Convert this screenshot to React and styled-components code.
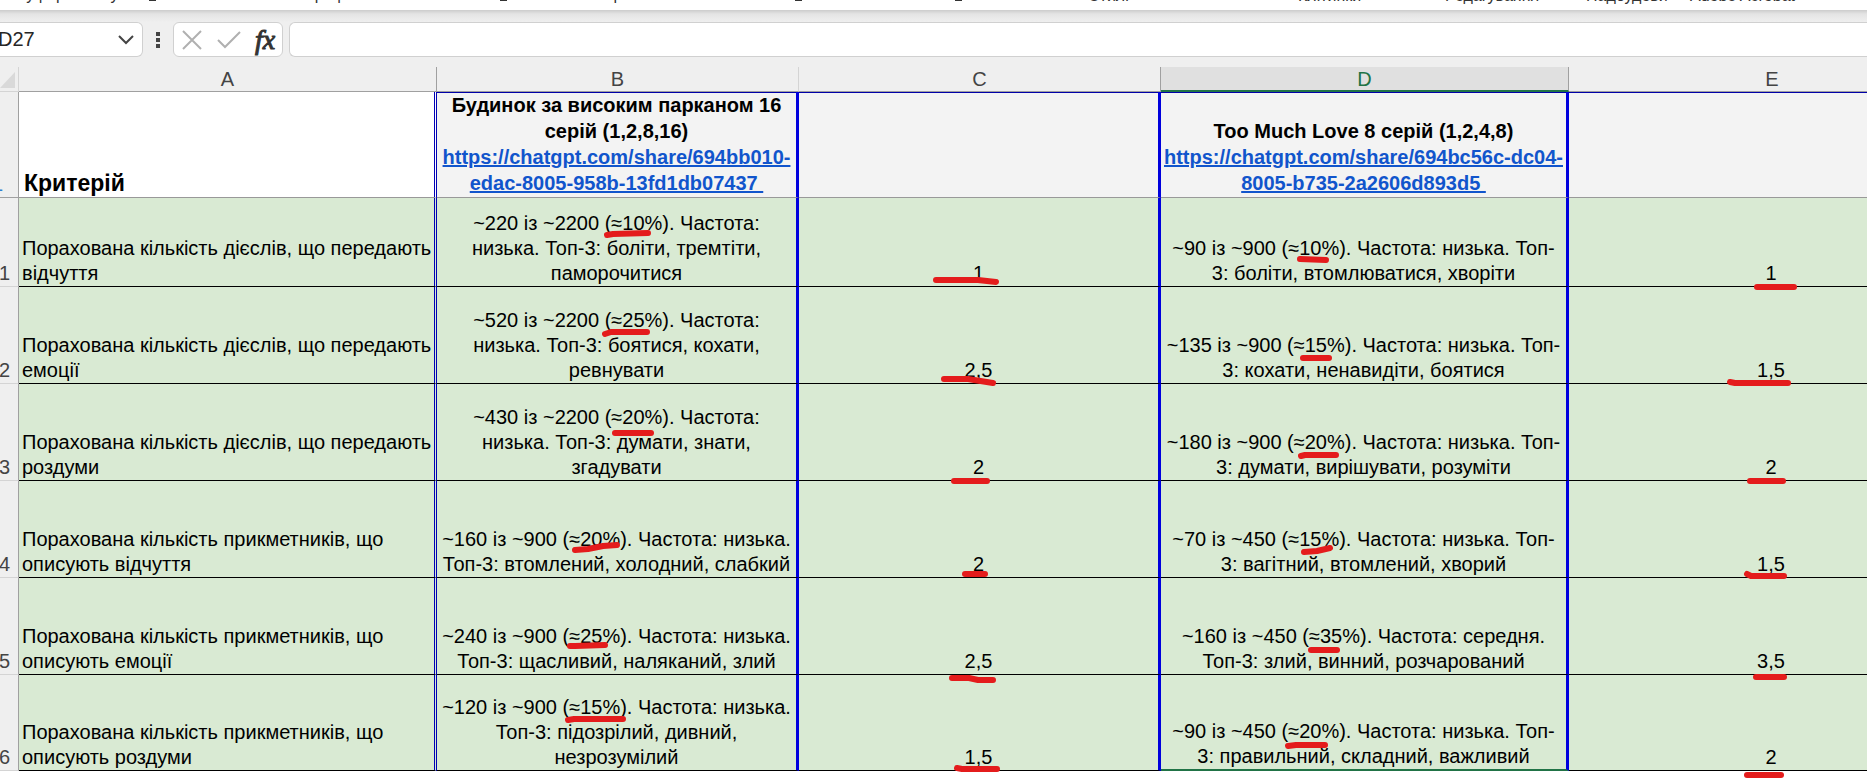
import styled, { createGlobalStyle } from 'styled-components'

const GlobalStyle = createGlobalStyle`
  * {
    box-sizing: border-box;
  }
  body {
    margin: 0;
    background: #ffffff;
    color: #000000;
    font-family: "Liberation Sans", Arial, sans-serif;
    overflow: hidden;
  }
`

const Page = styled.main`
  display: flex;
  flex-direction: column;
  min-height: 100vh;
  overflow: hidden;
`

// Only the last pixels of the ribbon are scrolled into view
const Ribbon = styled.div`
  position: relative;
  height: 10px;
  flex: none;
  overflow: hidden;
  background: #ffffff;
`

const RibbonGroup = styled.span`
  position: absolute;
  bottom: ${props => props.$high ? 6 : 5}px;
  left: ${props => props.$left}px;
  font-size: 16px;
  line-height: 18px;
  white-space: nowrap;
  color: #333333;
`

const Launcher = styled.span`
  position: absolute;
  top: 0;
  left: ${props => props.$left}px;
  width: 7px;
  height: 1px;
  background: #333333;
`

const FormulaBar = styled.div`
  display: flex;
  align-items: center;
  flex: none;
  height: 57px;
  padding: 2px 0 0;
  background: linear-gradient(#cccccc, #e4e4e4 4px, #efefef 12px);
`

const NameBox = styled.div`
  display: flex;
  align-items: center;
  width: 143px;
  height: 35px;
  background: #ffffff;
  border: 1px solid #d0d0d0;
  border-left: none;
  border-radius: 0 6px 6px 0;
`

const NameInput = styled.input`
  width: 112px;
  padding: 0;
  border: none;
  outline: none;
  background: none;
  font: 20px "Liberation Sans", Arial, sans-serif;
  color: #262626;
  text-indent: -2px;
`

const IconButton = styled.button`
  display: flex;
  align-items: center;
  justify-content: center;
  flex: none;
  width: ${props => props.$w || 24}px;
  height: 33px;
  padding: 0;
  border: none;
  background: none;
  color: ${props => props.$color || '#444444'};
`

const FxButton = styled(IconButton)`
  font: italic 28px "Liberation Serif", "Times New Roman", serif;
  color: #333333;
  -webkit-text-stroke: 1px #333333;
`

const Actions = styled.div`
  display: flex;
  align-items: center;
  justify-content: space-between;
  width: 110px;
  height: 35px;
  padding: 0 5px 0 6px;
  background: #ffffff;
  border: 1px solid #d0d0d0;
  border-radius: 6px;
`

const FormulaField = styled.div`
  display: flex;
  flex: 1;
  height: 35px;
  margin-left: 6px;
  background: #ffffff;
  border: 1px solid #d0d0d0;
  border-right: none;
  border-radius: 6px 0 0 6px;
  overflow: hidden;
`

const FormulaInput = styled.input`
  flex: 1;
  padding: 0 10px;
  border: none;
  outline: none;
  background: none;
  font: 20px "Liberation Sans", Arial, sans-serif;
`

const ExpandButton = styled(IconButton)`
  margin-right: -22px;
`

const Sheet = styled.section`
  position: relative;
  flex: 1;
`

const Table = styled.table`
  width: 1976px;
  table-layout: fixed;
  border-collapse: separate;
  border-spacing: 0;
`

const Col = styled.col`
  width: ${props => props.$w}px;
`

const ColumnHead = styled.th`
  height: 25px;
  padding: 0;
  font-size: 20px;
  line-height: 22px;
  font-weight: normal;
  color: ${props => props.$active ? '#217346' : '#444444'};
  background: ${props => props.$active ? '#e0e0e0' : '#efefef'};
  border-right: 1px solid ${props => props.$edge || '#d4d4d4'};
  border-bottom: ${props => props.$active ? '2px solid #217346' : '1px solid #a0a0a0'};
`

const Corner = styled.td`
  padding: 5px 3px 3px 0;
  background: #efefef;
  border-right: 1px solid #d4d4d4;
  border-bottom: 1px solid #d4d4d4;
  vertical-align: bottom;

  svg {
    display: block;
  }
`

const RowHead = styled.th`
  padding: 0;
  font-size: 20px;
  line-height: 25px;
  font-weight: normal;
  text-align: left;
  text-indent: ${props => props.$frozen ? -8 : -1}px;
  vertical-align: bottom;
  color: ${props => props.$frozen ? '#2f80d0' : '#444444'};
  background: #efefef;
  border-right: 1px solid #a0a0a0;
  border-bottom: 1px solid ${props => props.$frozen ? '#a0a0a0' : '#d4d4d4'};
`

const Cell = styled.td`
  height: ${props => props.$h}px;
  padding: 0 ${props => props.$left ? 3 : 0}px;
  font-size: 20px;
  line-height: 25px;
  text-align: ${props => props.$left ? 'left' : 'center'};
  vertical-align: bottom;
  background: #d9ead3;
  border-bottom: ${props => props.$selected ? '2px solid #217346' : '1px solid #000000'};
  border-right: ${props => props.$left ? '3px double #0000b4' : '3px solid #0000dd'};
`

const HeadCell = styled(Cell)`
  padding: 0 ${props => props.$left ? 5 : 0}px 1px;
  font-size: ${props => props.$left ? 23 : 20}px;
  line-height: 26px;
  font-weight: bold;
  background: ${props => props.$left ? '#ffffff' : '#f3f3f3'};
  box-shadow: ${props => props.$left ? 'none' : 'inset 0 1px #0000a8'};
  border-bottom: 1px solid #999999;
`

const Line = styled.span`
  display: block;
  white-space: pre;
`

const Link = styled.a`
  color: #1155cc;
  text-decoration: underline;
  text-decoration-thickness: 2px;
  white-space: pre;
`

const Marks = styled.svg`
  position: absolute;
  top: 0;
  left: 0;
  width: 1867px;
  height: 712px;
  pointer-events: none;
`

const groups = [
  { left: 16, text: 'Буфер обміну', high: true },
  { left: 300, text: 'Шрифт', high: true },
  { left: 594, text: 'Вирівнювання', high: true },
  { left: 1088, text: 'Стилі' },
  { left: 1298, text: 'Клітинки' },
  { left: 1445, text: 'Редагування' },
  { left: 1586, text: 'Надбудови' },
  { left: 1690, text: 'Adobe Acrobat' },
]

const launchers = [149, 500, 795, 955]

const rows = [
  {
    n: '1', h: 89,
    a: ['Порахована кількість дієслів, що передають', 'відчуття'],
    b: ['~220 із ~2200 (≈10%). Частота:', 'низька. Топ-3: боліти, тремтіти,', 'паморочитися'],
    c: '1',
    d: ['~90 із ~900 (≈10%). Частота: низька. Топ-', '3: боліти, втомлюватися, хворіти'],
    e: '1',
  },
  {
    n: '2', h: 97,
    a: ['Порахована кількість дієслів, що передають', 'емоції'],
    b: ['~520 із ~2200 (≈25%). Частота:', 'низька. Топ-3: боятися, кохати,', 'ревнувати'],
    c: '2,5',
    d: ['~135 із ~900 (≈15%). Частота: низька. Топ-', '3: кохати, ненавидіти, боятися'],
    e: '1,5',
  },
  {
    n: '3', h: 97,
    a: ['Порахована кількість дієслів, що передають', 'роздуми'],
    b: ['~430 із ~2200 (≈20%). Частота:', 'низька. Топ-3: думати, знати,', 'згадувати'],
    c: '2',
    d: ['~180 із ~900 (≈20%). Частота: низька. Топ-', '3: думати, вирішувати, розуміти'],
    e: '2',
  },
  {
    n: '4', h: 97,
    a: ['Порахована кількість прикметників, що', 'описують відчуття'],
    b: ['~160 із ~900 (≈20%). Частота: низька.', 'Топ-3: втомлений, холодний, слабкий'],
    c: '2',
    d: ['~70 із ~450 (≈15%). Частота: низька. Топ-', '3: вагітний, втомлений, хворий'],
    e: '1,5',
  },
  {
    n: '5', h: 97,
    a: ['Порахована кількість прикметників, що', 'описують емоції'],
    b: ['~240 із ~900 (≈25%). Частота: низька.', 'Топ-3: щасливий, наляканий, злий'],
    c: '2,5',
    d: ['~160 із ~450 (≈35%). Частота: середня.', 'Топ-3: злий, винний, розчарований'],
    e: '3,5',
  },
  {
    n: '6', h: 96,
    a: ['Порахована кількість прикметників, що', 'описують роздуми'],
    b: ['~120 із ~900 (≈15%). Частота: низька.', 'Топ-3: підозрілий, дивний,', 'незрозумілий'],
    c: '1,5',
    d: ['~90 із ~450 (≈20%). Частота: низька. Топ-', '3: правильний, складний, важливий'],
    e: '2',
  },
]

// Red pen strokes, in window coordinates
const strokes = [
  'M607 235 L613 234 L648 233',
  'M936 280 H978 L996 282',
  'M1300 259 L1326 260',
  'M1757 287 H1794',
  'M605 334 L611 332 H647',
  'M944 379 H968 L993 383',
  'M1303 358 H1329',
  'M1730 382 L1735 383 H1788',
  'M615 433 H651',
  'M954 481 H987',
  'M1301 456 L1305 455 H1336',
  'M1750 481 H1783',
  'M575 550 L588 549 L603 546 L617 545',
  'M965 574 H985',
  'M1304 552 L1317 551 L1330 548',
  'M1747 574 L1751 576 H1784',
  'M570 646 L575 646 L605 645',
  'M952 678 H969 L978 680 H993',
  'M1311 650 H1337',
  'M1756 677 H1784',
  'M568 720 L574 719 H623',
  'M957 768 L962 769 H997',
  'M1288 746 L1296 745 H1325',
  'M1747 775 H1781',
]

const TextLines = ({ lines }) => lines.map(line => <Line key={line}>{line}</Line>)

const App = () => {
  return (
    <Page>
      <GlobalStyle />
      <Ribbon>
        {groups.map(group => (
          <RibbonGroup key={group.text} $left={group.left} $high={group.high}>{group.text}</RibbonGroup>
        ))}
        {launchers.map(left => <Launcher key={left} $left={left} />)}
      </Ribbon>

      <FormulaBar>
        <NameBox>
          <NameInput aria-label="Ім'я" defaultValue="D27" />
          <IconButton aria-label="Список імен" $w={28}>
            <svg width="16" height="10" viewBox="0 0 16 10" fill="none" stroke="currentColor" strokeWidth="2">
              <path d="M1 1 L8 8 L15 1" />
            </svg>
          </IconButton>
        </NameBox>
        <IconButton aria-label="Змінити розмір" $w={30}>
          <svg width="4" height="16" viewBox="0 0 4 16" fill="currentColor">
            <path d="M0 0h4v4h-4z M0 6h4v4h-4z M0 12h4v4h-4z" />
          </svg>
        </IconButton>
        <Actions>
          <IconButton aria-label="Скасувати" $color="#b0b0b0">
            <svg width="20" height="20" viewBox="0 0 20 20" fill="none" stroke="currentColor" strokeWidth="2">
              <path d="M1 1 L19 19 M19 1 L1 19" />
            </svg>
          </IconButton>
          <IconButton aria-label="Ввести" $color="#b0b0b0">
            <svg width="24" height="18" viewBox="0 0 24 18" fill="none" stroke="currentColor" strokeWidth="2">
              <path d="M1 9 L8 16 L23 1" />
            </svg>
          </IconButton>
          <FxButton aria-label="Вставити функцію">fx</FxButton>
        </Actions>
        <FormulaField>
          <FormulaInput aria-label="Рядок формул" />
          <ExpandButton aria-label="Розгорнути рядок формул">
            <svg width="20" height="10" viewBox="0 0 20 10" fill="none" stroke="currentColor" strokeWidth="2">
              <path d="M0 0 L10 8 L20 0" />
            </svg>
          </ExpandButton>
        </FormulaField>
      </FormulaBar>

      <Sheet>
        <Table>
          <colgroup>
            <Col $w={19} />
            <Col $w={418} />
            <Col $w={362} />
            <Col $w={362} />
            <Col $w={408} />
            <Col $w={407} />
          </colgroup>
          <thead>
            <tr>
              <Corner>
                <svg width="15" height="16" viewBox="0 0 15 16" fill="#d9d9d9">
                  <path d="M15 0 V16 H0 Z" />
                </svg>
              </Corner>
              <ColumnHead $edge="#a0a0a0">A</ColumnHead>
              <ColumnHead>B</ColumnHead>
              <ColumnHead $edge="#a0a0a0">C</ColumnHead>
              <ColumnHead $active $edge="#a0a0a0">D</ColumnHead>
              <ColumnHead>E</ColumnHead>
            </tr>
          </thead>
          <tbody>
            <tr>
              <RowHead $frozen>1</RowHead>
              <HeadCell $h={106} $left>Критерій</HeadCell>
              <HeadCell>
                <TextLines lines={['Будинок за високим парканом 16', 'серій (1,2,8,16)']} />
                <Link href="https://chatgpt.com/share/694bb010-edac-8005-958b-13fd1db07437">
                  {'https://chatgpt.com/share/694bb010-\nedac-8005-958b-13fd1db07437\u00a0'}
                </Link>
              </HeadCell>
              <HeadCell />
              <HeadCell>
                <TextLines lines={['Too Much Love 8 серій (1,2,4,8)']} />
                <Link href="https://chatgpt.com/share/694bc56c-dc04-8005-b735-2a2606d893d5">
                  {'https://chatgpt.com/share/694bc56c-dc04-\n8005-b735-2a2606d893d5\u00a0'}
                </Link>
              </HeadCell>
              <HeadCell />
            </tr>
            {rows.map((row, i) => (
              <tr key={row.n}>
                <RowHead>{row.n}</RowHead>
                <Cell $h={row.h} $left><TextLines lines={row.a} /></Cell>
                <Cell><TextLines lines={row.b} /></Cell>
                <Cell>{row.c}</Cell>
                <Cell $selected={i === rows.length - 1}><TextLines lines={row.d} /></Cell>
                <Cell>{row.e}</Cell>
              </tr>
            ))}
          </tbody>
        </Table>
        <Marks viewBox="0 67 1867 712" fill="none" stroke="#e41c1c" strokeWidth="6" strokeLinecap="round" strokeLinejoin="round">
          {strokes.map(d => <path key={d} d={d} />)}
        </Marks>
      </Sheet>
    </Page>
  )
}

export default App
